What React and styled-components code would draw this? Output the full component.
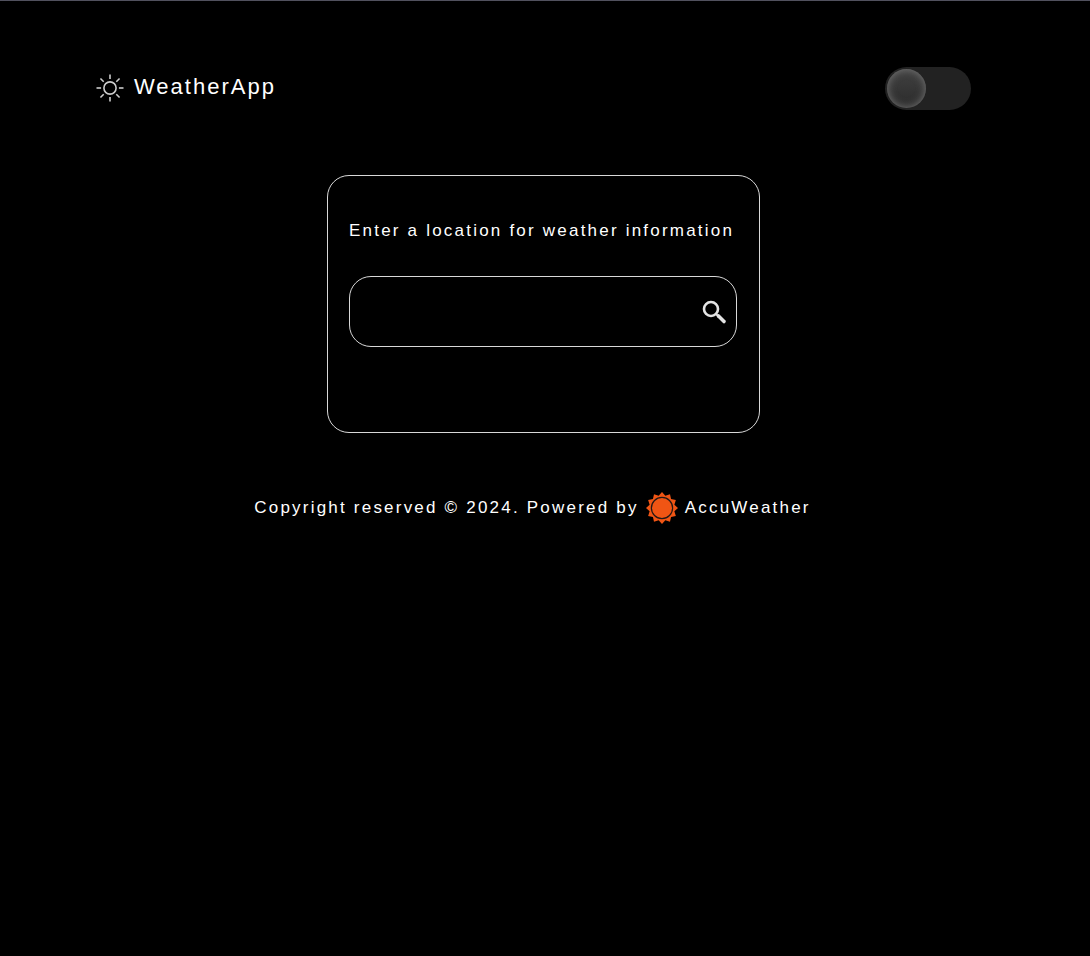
import React, { useState } from "react";
import styled, { createGlobalStyle } from "styled-components";

const GlobalStyle = createGlobalStyle`
  *, *::before, *::after { box-sizing: border-box; }
  body {
    margin: 0;
    background: #000;
    color: #fff;
    font-family: "Liberation Sans", Arial, sans-serif;
  }
`;

const Page = styled.div`
  min-height: 100vh;
  border-top: 1px solid #51515e;
  background: #000;
`;

const Header = styled.header`
  display: flex;
  align-items: center;
  justify-content: space-between;
  padding: 66px 119px 65px 96px;
`;

const Brand = styled.h1`
  display: flex;
  align-items: center;
  gap: 10px;
  margin: 0;
  padding-bottom: 2px;
  font-size: 22px;
  line-height: 26px;
  font-weight: 400;
  letter-spacing: 2px;
`;

const BrandName = styled.span`
  padding-bottom: 1px;
`;

const BrandIcon = styled.svg`
  width: 28px;
  height: 28px;
`;

const Toggle = styled.label`
  display: flex;
  width: 86px;
  height: 43px;
  border-radius: 22px;
  background: #222;
  cursor: pointer;
`;

const ToggleInput = styled.input`
  appearance: none;
  width: 100%;
  height: 100%;
  margin: 0;
  padding: 2px;
  border-radius: 22px;
  cursor: pointer;

  &::before {
    content: "";
    display: block;
    width: 39px;
    height: 39px;
    border-radius: 50%;
    background: linear-gradient(#414141, #2b2b2b);
    box-shadow: inset 0 0 8px #777;
  }

  &:checked::before {
    margin-left: auto;
  }
`;

const Main = styled.main`
  display: flex;
  justify-content: center;
  padding-right: 3px;
`;

const SearchCard = styled.form`
  display: flex;
  flex-direction: column;
  width: 433px;
  padding: 45px 22px 85px 21px;
  border: 1px solid #d8d8d8;
  border-radius: 22px;
`;

const SearchLabel = styled.label`
  margin-bottom: 35px;
  font-size: 17px;
  line-height: 20px;
  letter-spacing: 0.13em;
  white-space: nowrap;
`;

const SearchField = styled.div`
  display: flex;
  align-items: center;
  height: 71px;
  padding: 0 8px 0 20px;
  border: 1px solid #d8d8d8;
  border-radius: 22px;
`;

const SearchInput = styled.input`
  flex: 1;
  min-width: 0;
  height: 100%;
  border: 0;
  outline: 0;
  background: transparent;
  color: #fff;
  font: inherit;
  letter-spacing: 0.13em;
`;

const SearchButton = styled.button`
  display: flex;
  padding: 0;
  border: 0;
  background: transparent;
  cursor: pointer;
`;

const SearchIcon = styled.svg`
  width: 28px;
  height: 28px;
`;

const Footer = styled.footer`
  display: flex;
  align-items: center;
  justify-content: center;
  gap: 7px;
  padding: 59px 25px 0 0;
  font-size: 17px;
  line-height: 20px;
  letter-spacing: 0.13em;
`;

const FooterText = styled.span`
  padding-bottom: 1px;
`;

const FooterLogo = styled.svg`
  width: 32px;
  height: 32px;
`;

const rays = [0, 45, 90, 135, 180, 225, 270, 315];

const burst = Array.from({ length: 24 }, (_, i) => {
  const angle = (i * Math.PI) / 12;
  const radius = i % 2 ? 12.8 : 16;
  return `${16 + radius * Math.sin(angle)},${16 - radius * Math.cos(angle)}`;
}).join(" ");

function SunIcon() {
  return (
    <BrandIcon viewBox="0 0 28 28" fill="none" stroke="#ccc" strokeWidth="1.6" aria-hidden="true">
      <circle cx="14" cy="14" r="6.1" />
      {rays.map((angle) => (
        <path key={angle} d="M14 0.5v4.6" transform={`rotate(${angle} 14 14)`} />
      ))}
    </BrandIcon>
  );
}

function AccuWeatherLogo() {
  return (
    <FooterLogo viewBox="0 0 32 32" aria-hidden="true">
      <polygon points={burst} fill="#f05514" />
      <circle cx="16" cy="16" r="10.6" fill="#f05514" stroke="#231815" strokeWidth="1.2" />
    </FooterLogo>
  );
}

export default function App() {
  const [light, setLight] = useState(false);
  const [location, setLocation] = useState("");

  return (
    <Page>
      <GlobalStyle />
      <Header>
        <Brand>
          <SunIcon />
          <BrandName>WeatherApp</BrandName>
        </Brand>
        <Toggle>
          <ToggleInput
            type="checkbox"
            aria-label="Light mode"
            checked={light}
            onChange={(e) => setLight(e.target.checked)}
          />
        </Toggle>
      </Header>
      <Main>
        <SearchCard onSubmit={(e) => e.preventDefault()}>
          <SearchLabel htmlFor="location">Enter a location for weather information</SearchLabel>
          <SearchField>
            <SearchInput id="location" type="text" value={location} onChange={(e) => setLocation(e.target.value)} />
            <SearchButton type="submit" aria-label="Search">
              <SearchIcon viewBox="0 0 28 28" fill="none" stroke="#e4e4e4" aria-hidden="true">
                <circle cx="11" cy="11" r="7" strokeWidth="2.6" />
                <path d="M16 16l2 2" strokeWidth="2" />
                <path d="M18.5 18l5.5 5.5" strokeWidth="3.6" strokeLinecap="round" />
              </SearchIcon>
            </SearchButton>
          </SearchField>
        </SearchCard>
      </Main>
      <Footer>
        <FooterText>Copyright reserved © 2024. Powered by</FooterText>
        <AccuWeatherLogo />
        <FooterText>AccuWeather</FooterText>
      </Footer>
    </Page>
  );
}
